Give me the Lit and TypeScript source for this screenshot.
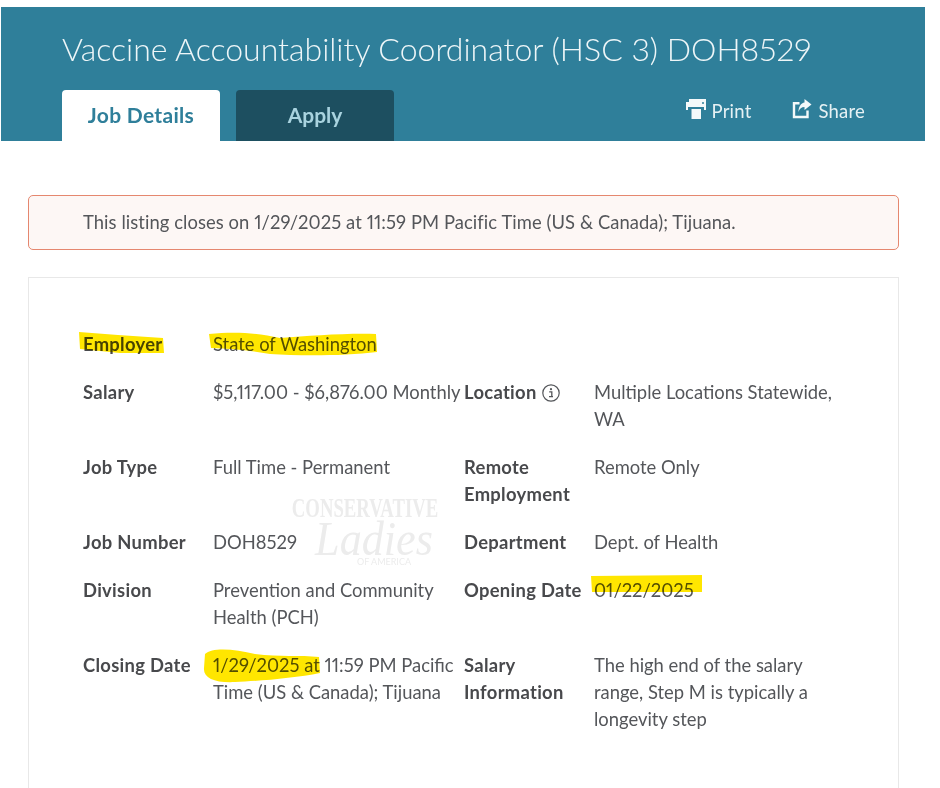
import { LitElement, html, css, svg } from "lit";
import { customElement } from "lit/decorators.js";

type Cell = { label: string; value: string };

const ROWS: [Cell, Cell?][] = [
	[{ label: "Employer", value: "State of Washington" }],
	[
		{ label: "Salary", value: "$5,117.00 - $6,876.00 Monthly" },
		{ label: "Location", value: "Multiple Locations Statewide, WA" },
	],
	[
		{ label: "Job Type", value: "Full Time - Permanent" },
		{ label: "Remote Employment", value: "Remote Only" },
	],
	[
		{ label: "Job Number", value: "DOH8529" },
		{ label: "Department", value: "Dept. of Health" },
	],
	[
		{ label: "Division", value: "Prevention and Community Health (PCH)" },
		{ label: "Opening Date", value: "01/22/2025" },
	],
	[
		{ label: "Closing Date", value: "1/29/2025 at 11:59 PM Pacific Time (US & Canada); Tijuana" },
		{ label: "Salary Information", value: "The high end of the salary range, Step M is typically a longevity step" },
	],
];

// hand drawn highlighter strokes, in page coordinates
const MARKS = [
	"M79 332 L118 335 L163 338 L164 353 L120 353 L80 349 Z",
	"M209 334 C240 331 260 334 280 338 C310 336 345 333 376 334 L377 352 C345 356 300 356 270 354 C250 350 230 349 211 348 Z",
	"M591 576 L702 575 L702 592 L660 592 L592 592 Z",
	"M205 654 C212 647 235 649 255 654 C280 657 300 655 319 657 L320 673 C295 678 260 681 235 682 C215 683 203 678 204 668 Z",
];

@customElement("app-root")
export class AppRoot extends LitElement {
	static styles = css`
		:host {
			display: block;
			position: relative;
			height: 788px;
			overflow: hidden;
			background: #fff;
			color: #54565a;
			font-family: Lato, "Liberation Sans", sans-serif;
			font-size: 18.4px;
			font-variant-numeric: proportional-nums;
			line-height: 27px;
		}

		.banner {
			margin: 7px 15px 0 1px;
			height: 134px;
			box-sizing: border-box;
			background: #2f7f9a;
			padding: 23px 60px 0 61px;
			display: flex;
			flex-direction: column;
			justify-content: space-between;
		}

		h1 {
			margin: 0;
			font-size: 32px;
			line-height: 38px;
			font-weight: 300;
			color: #eef6f8;
			white-space: nowrap;
		}

		.nav {
			display: flex;
			align-items: flex-end;
			gap: 16px;
		}

		.tab {
			width: 158px;
			height: 51px;
			display: flex;
			align-items: center;
			justify-content: center;
			border-radius: 4px 4px 0 0;
			font-size: 21px;
			font-weight: 700;
			padding-bottom: 3px;
			box-sizing: border-box;
		}

		.tab.active {
			background: #fff;
			color: #2f7f9a;
			letter-spacing: 0.3px;
		}

		.tab.apply {
			background: #1d4f60;
			color: #a9d3df;
		}

		.actions {
			margin-left: auto;
			display: flex;
			gap: 41px;
			padding-bottom: 16px;
			color: #e6f1f4;
			font-size: 18.5px;
			letter-spacing: 0.2px;
		}

		.action {
			display: flex;
			align-items: center;
			gap: 6px;
		}

		.action svg {
			display: block;
			margin-top: -6px;
		}

		.content {
			padding: 54px 41px 0 28px;
		}

		.notice {
			height: 55px;
			box-sizing: border-box;
			display: flex;
			align-items: center;
			padding-left: 54px;
			border: 1px solid #e5876f;
			border-radius: 5px;
			background: #fdf7f5;
			margin-bottom: 27px;
			letter-spacing: 0.07px;
		}

		.card {
			position: relative;
			border: 1px solid #e8e8e8;
			height: 600px;
			box-sizing: border-box;
			padding: 53px 40px 0 54px;
		}

		.details {
			display: grid;
			grid-template-columns: 130px 251px 130px 1fr;
			row-gap: 21px;
		}

		.label {
			font-weight: 700;
			color: #48494c;
			letter-spacing: 0.3px;
		}

		.wide {
			padding-right: 10px;
		}

		.info {
			display: inline-block;
			vertical-align: -3px;
			margin-left: 1px;
		}

		.marks {
			position: absolute;
			inset: 0;
			mix-blend-mode: multiply;
			pointer-events: none;
		}

		.watermark {
			position: absolute;
			left: 241px;
			top: 217px;
			width: 190px;
			text-align: center;
			color: #ececec;
			pointer-events: none;
		}

		.wm-top {
			font-family: "Liberation Serif", serif;
			font-weight: 700;
			font-size: 24px;
			line-height: 26px;
			white-space: nowrap;
			transform: scale(0.78, 1.1);
			display: block;
		}

		.wm-script {
			font-family: "Liberation Serif", serif;
			font-style: italic;
			font-size: 48px;
			line-height: 36px;
			display: block;
			margin-left: 18px;
			transform: scaleX(0.92);
		}

		.wm-small {
			font-size: 9px;
			line-height: 8px;
			display: block;
			margin: 1px 0 0 38px;
		}
	`;

	private printIcon() {
		return html`<svg width="20" height="20" viewBox="0 0 20 20" fill="#f4f9fa">
			<path d="M3 0h17v11h-2V8H2v3H0V3h3z" />
			<path d="M2 3h16v5H2z" />
			<path d="M5.500 10h9.500v10H5.500z" />
			<circle cx="17" cy="4" r="1" fill="#2f7f9a" />
		</svg>`;
	}

	private shareIcon() {
		return html`<svg width="20" height="20" viewBox="0 0 20 20" fill="none">
			<path d="M7.500 4.200H2V18H15.500V11.500" stroke="#f4f9fa" stroke-width="2.400" />
			<path d="M12.500 0L19.500 5.500L12.500 11V8C9.500 8 7.500 9.800 6.500 13C6.500 7.500 9 4 12.500 3.500Z" fill="#f4f9fa" />
		</svg>`;
	}

	private infoIcon() {
		return html`<svg class="info" width="18" height="18" viewBox="0 0 18 18" fill="none">
			<circle cx="9" cy="9" r="8.200" stroke="#54565a" stroke-width="1.200" />
			<circle cx="9" cy="5.200" r="1.100" fill="#54565a" />
			<path d="M7.200 7.800H9.800V12.600H11M7 12.600H11" stroke="#54565a" stroke-width="1.300" />
		</svg>`;
	}

	private renderCell(cell: Cell | undefined, right: boolean) {
		if (!cell) return html`<div></div><div></div>`;
		return html`
			<div class="label">
				${cell.label}${cell.label === "Location" ? html` ${this.infoIcon()}` : ""}
			</div>
			<div class="value ${right ? "wide" : ""}">${cell.value}</div>
		`;
	}

	render() {
		return html`
			<header class="banner">
				<h1>Vaccine Accountability Coordinator (HSC 3) DOH8529</h1>
				<div class="nav">
					<div class="tab active">Job Details</div>
					<div class="tab apply">Apply</div>
					<div class="actions">
						<div class="action">${this.printIcon()}Print</div>
						<div class="action">${this.shareIcon()}Share</div>
					</div>
				</div>
			</header>
			<main class="content">
				<div class="notice">
					This listing closes on 1/29/2025 at 11:59 PM Pacific Time (US &amp; Canada); Tijuana.
				</div>
				<section class="card">
					<div class="details">
						${ROWS.map(
							([a, b]) => html`${this.renderCell(a, false)}${this.renderCell(b, true)}`
						)}
					</div>
					<div class="watermark">
						<span class="wm-top">CONSERVATIVE</span>
						<span class="wm-script">Ladies</span>
						<span class="wm-small">OF AMERICA</span>
					</div>
				</section>
			</main>
			<svg class="marks" width="940" height="788" viewBox="0 0 940 788">
				${MARKS.map((d) => svg`<path d=${d} fill="#ffe600" />`)}
			</svg>
		`;
	}
}
